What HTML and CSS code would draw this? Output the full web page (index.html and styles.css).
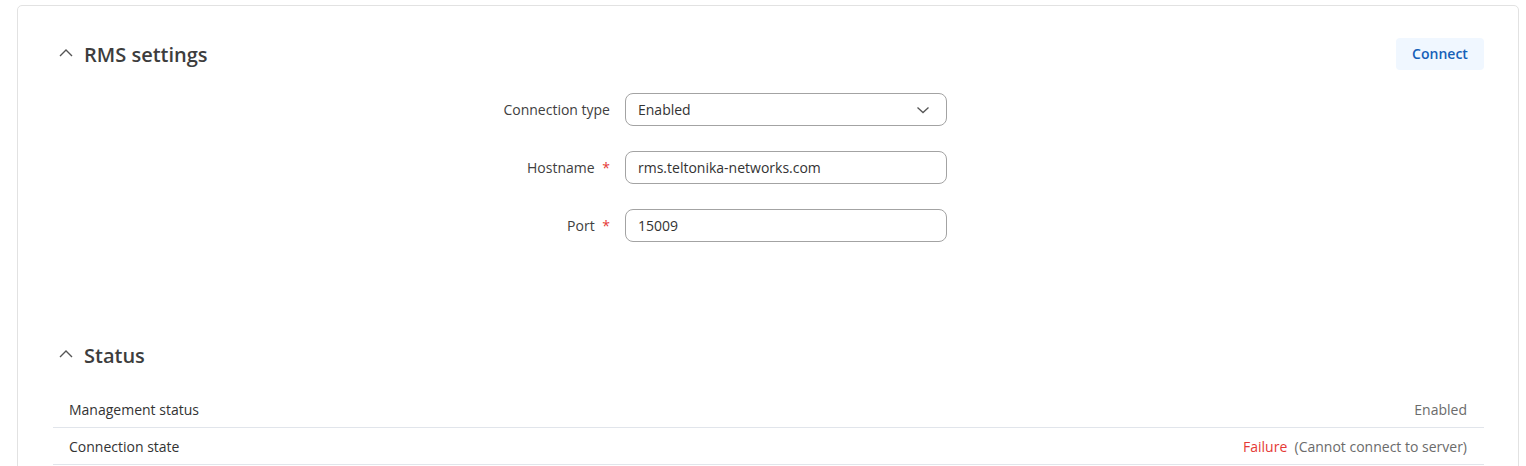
FILE: index.html
```html
<!DOCTYPE html>
<html>
<head>
<meta charset="utf-8">
<link rel="stylesheet" href="styles.css">
</head>
<body>
<div class="card">
  <section class="section">
    <div class="section-header">
      <div class="section-title">
        <svg class="caret" width="16" height="10" viewBox="0 0 16 10"><path d="M2 8 L8 2 L14 8" fill="none" stroke="#555" stroke-width="1.4"/></svg>
        <h2>RMS settings</h2>
      </div>
      <button class="btn-connect">Connect</button>
    </div>
    <div class="form">
      <div class="form-row">
        <label class="form-label">Connection type</label>
        <div class="field select">
          <span>Enabled</span>
          <svg width="14" height="8" viewBox="0 0 14 8"><path d="M1.5 1.5 L7 6.5 L12.5 1.5" fill="none" stroke="#555" stroke-width="1.3"/></svg>
        </div>
      </div>
      <div class="form-row">
        <label class="form-label">Hostname <span class="req">*</span></label>
        <div class="field"><span>rms.teltonika-networks.com</span></div>
      </div>
      <div class="form-row">
        <label class="form-label">Port <span class="req">*</span></label>
        <div class="field"><span>15009</span></div>
      </div>
    </div>
  </section>
  <section class="section status">
    <div class="section-header">
      <div class="section-title">
        <svg class="caret" width="16" height="10" viewBox="0 0 16 10"><path d="M2 8 L8 2 L14 8" fill="none" stroke="#555" stroke-width="1.4"/></svg>
        <h2>Status</h2>
      </div>
    </div>
    <div class="table">
      <div class="trow"><span class="tkey">Management status</span><span class="tval">Enabled</span></div>
      <div class="trow"><span class="tkey">Connection state</span><span class="tval"><span class="fail">Failure</span>&nbsp; (Cannot connect to server)</span></div>
    </div>
  </section>
</div>
</body>
</html>
```
FILE: styles.css
```css
* { box-sizing: border-box; }
html, body { margin: 0; background: #fff; }
body {
  padding: 5px 7px 0 17px;
  font-family: "Open Sans", "Liberation Sans", sans-serif;
  font-size: 14px;
  color: #404040;
  overflow: hidden;
  height: 466px;
}
.card {
  border: 1px solid #e2e2e2;
  border-radius: 5px;
  padding: 32px 34px 0 35px;
  min-height: 470px;
}
.section-header {
  height: 32px;
  display: flex;
  align-items: center;
  justify-content: space-between;
}
.section-title {
  display: flex;
  align-items: center;
  padding-left: 5px;
}
.caret { margin-right: 10px; margin-top: -3px; }
h2 {
  margin: 0;
  font-size: 20px;
  font-weight: 600;
  color: #3d3d3d;
}
.btn-connect {
  width: 88px;
  height: 32px;
  border: none;
  border-radius: 4px;
  background: #f0f7ff;
  color: #1560b8;
  font-family: inherit;
  font-size: 14px;
  font-weight: 600;
  margin-top: -1px;
}
.form {
  padding-top: 23px;
  display: flex;
  flex-direction: column;
  gap: 25px;
  height: 269px;
}
.form-row {
  display: flex;
  align-items: center;
}
.form-label {
  width: 572px;
  padding-right: 15px;
  text-align: right;
  color: #404040;
}
.req { color: #e53935; margin-left: 4px; }
.field {
  width: 322px;
  height: 33px;
  border: 1px solid #a3a3a3;
  border-radius: 8px;
  padding: 0 16px 0 12px;
  display: flex;
  align-items: center;
  justify-content: space-between;
  color: #333;
}
.table { margin-top: 20px; }
.trow {
  height: 37px;
  border-bottom: 1px solid #e1e5eb;
  display: flex;
  align-items: center;
  justify-content: space-between;
  padding: 0 17px 0 16px;
}
.tkey { color: #333; }
.tval { color: #6b6b6b; }
.fail { color: #e53935; }
```
